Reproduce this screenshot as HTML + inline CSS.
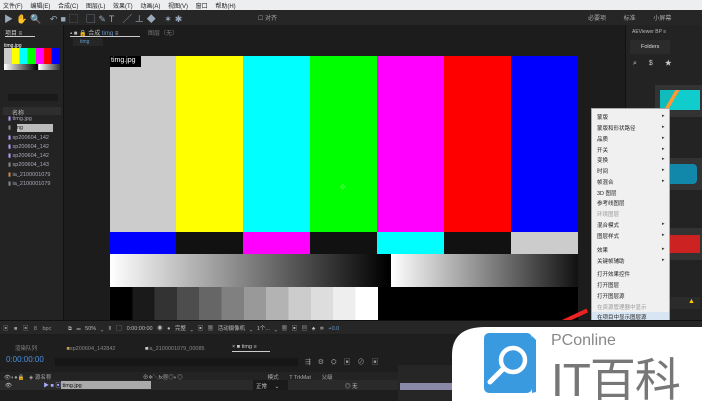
<!DOCTYPE html>
<html><head><meta charset="utf-8"><style>
*{margin:0;padding:0;box-sizing:border-box}
body{width:702px;height:401px;overflow:hidden;background:#1d1d1d;position:relative;font-family:"Liberation Sans","Noto Sans CJK SC",sans-serif;font-size:6px;color:#aaa}
.a{position:absolute}
.t{position:absolute;white-space:nowrap}
.m{position:absolute;left:597px;color:#222;font-size:5.5px;white-space:nowrap}
.r{position:absolute;left:662px;color:#333;font-size:5px}
</style></head><body>
<div class="a" style="left:0;top:0;width:702px;height:10px;background:#eceef0"></div>
<div class="t" style="left:3px;top:1px;color:#222;font-size:6px;word-spacing:6px">文件(F) 编辑(E) 合成(C) 图层(L) 效果(T) 动画(A) 视图(V) 窗口 帮助(H)</div>
<div class="a" style="left:0;top:10px;width:702px;height:15px;background:#262626"></div>
<div class="t" style="left:4px;top:12px;color:#9ab;font-size:9px;letter-spacing:3px">▶✋🔍 ↶■⬚ ▢✎T ╱⊥◆ ✶✱</div>
<div class="t" style="left:258px;top:13px;font-size:6px">☐ 对齐</div>
<div class="t" style="left:588px;top:13px;font-size:6px;word-spacing:16px">必要项 标准 小屏幕</div>
<div class="a" style="left:0;top:25px;width:63px;height:295px;background:#232323"></div>
<div class="t" style="left:5px;top:28px;color:#ccc">项目 ≡</div>
<div class="a" style="left:5px;top:36px;width:30px;height:1px;background:#ccc"></div>
<div class="t" style="left:4px;top:43px;color:#fff;font-size:5px">timg.jpg</div>
<div class="a" style="left:4px;top:48px;width:56px;height:16px;background:linear-gradient(90deg,#ccc 0 14%,#ff0 14% 28%,#0ff 28% 42%,#0f0 42% 57%,#f0f 57% 71%,#f00 71% 85%,#00f 85%)"></div>
<div class="a" style="left:4px;top:64px;width:56px;height:6px;background:linear-gradient(90deg,#fff,#000 60%,#fff 62%,#333)"></div>
<div class="a" style="left:8px;top:94px;width:50px;height:7px;background:#1a1a1a"></div>
<div class="a" style="left:3px;top:107px;width:58px;height:8px;background:#2e2e2e"></div>
<div class="t" style="left:12px;top:108px;color:#bbb">名称</div>
<div class="a" style="left:17px;top:124px;width:36px;height:8px;background:#bbb"></div>
<div class="t" style="left:8px;top:115px;line-height:9.3px;font-size:5.5px;color:#aab">
<span style="color:#b9f">▮</span> timg.jpg<br><span style="color:#888">▮</span> <span style="color:#222">timg</span><br><span style="color:#b9f">▮</span> sp200604_142<br><span style="color:#b9f">▮</span> sp200604_142<br><span style="color:#b9f">▮</span> sp200604_142<br><span style="color:#888">▮</span> sp200604_143<br><span style="color:#c84">▮</span> ia_2100001079<br><span style="color:#888">▮</span> ia_2100001079</div>
<div class="a" style="left:63px;top:25px;width:562px;height:295px;background:#1c1c1c;border-left:1px solid #111"></div>
<div class="t" style="left:70px;top:28px;color:#bbb">▪ ■ 🔒 合成 <span style="color:#69c">timg</span> ≡</div>
<div class="a" style="left:70px;top:36px;width:70px;height:1px;background:#ccc"></div>
<div class="t" style="left:148px;top:28px;color:#777">图层（无）</div>
<div class="a" style="left:73px;top:38px;width:30px;height:8px;background:#262626"></div>
<div class="t" style="left:80px;top:39px;color:#69c;font-size:5px">timg</div>
<div class="a" style="left:110px;top:56px;width:468px;height:176px;background:linear-gradient(90deg,#ccc 0 66px,#ff0 66px 133px,#0ff 133px 200px,#0f0 200px 267px,#f0f 267px 334px,#f00 334px 401px,#00f 401px)"></div>
<div class="a" style="left:110px;top:232px;width:468px;height:22px;background:linear-gradient(90deg,#00f 0 66px,#111 66px 133px,#f0f 133px 200px,#111 200px 267px,#0ff 267px 334px,#111 334px 401px,#ccc 401px)"></div>
<div class="a" style="left:110px;top:254px;width:468px;height:33px;background:#000"></div>
<div class="a" style="left:110px;top:254px;width:278px;height:33px;background:linear-gradient(90deg,#fff,#000)"></div>
<div class="a" style="left:391px;top:254px;width:187px;height:33px;background:linear-gradient(90deg,#fff,#111)"></div>
<div class="a" style="left:110px;top:287px;width:468px;height:33px;background:#000"></div>
<div class="a" style="left:110px;top:287px;width:268px;height:33px;background:linear-gradient(90deg,#000 0 8.33%,#1a1a1a 8.33% 16.66%,#333 16.66% 25%,#4d4d4d 25% 33.3%,#666 33.3% 41.6%,#808080 41.6% 50%,#999 50% 58.3%,#b3b3b3 58.3% 66.6%,#ccc 66.6% 75%,#ddd 75% 83.3%,#eee 83.3% 91.6%,#fff 91.6%)"></div>
<div class="a" style="left:110px;top:56px;width:31px;height:11px;background:#000"></div>
<div class="t" style="left:111px;top:57px;color:#fff;font-size:7px">timg.jpg</div>
<div class="t" style="left:339px;top:182px;color:#8f8;font-size:9px">✧</div>
<div class="a" style="left:625px;top:25px;width:77px;height:295px;background:#232323;border-left:1px solid #111"></div>
<div class="t" style="left:632px;top:29px;font-size:5px;color:#bbb">AEViewer BP ≡</div>
<div class="a" style="left:630px;top:40px;width:40px;height:14px;background:#2b2b2b"></div>
<div class="t" style="left:641px;top:44px;font-size:5.5px;color:#ddd">Folders</div>
<div class="t" style="left:633px;top:58px;font-size:7px;color:#ccc;word-spacing:10px">⌕ $ ★</div>
<div class="a" style="left:655px;top:85px;width:47px;height:32px;background:#333"></div>
<div class="a" style="left:660px;top:90px;width:40px;height:20px;background:linear-gradient(120deg,#1bb 0 30%,#f93 30% 38%,#1cc 38%)"></div>
<div class="a" style="left:655px;top:158px;width:47px;height:32px;background:#333"></div>
<div class="a" style="left:665px;top:164px;width:32px;height:20px;background:#18a;border-radius:4px"></div>
<div class="a" style="left:655px;top:228px;width:47px;height:32px;background:#333"></div>
<div class="a" style="left:665px;top:235px;width:35px;height:18px;background:#c22"></div>
<div class="a" style="left:655px;top:297px;width:45px;height:12px;background:#2b2b2b"></div>
<div class="t" style="left:688px;top:298px;color:#fc0;font-size:7px">▲</div>
<!-- context menu -->
<div class="a" style="left:591px;top:108px;width:79px;height:225px;background:#f0f0f0;border:1px solid #aaa"></div>
<div class="a" style="left:592px;top:312px;width:77px;height:9px;background:#d8e6f4"></div>
<div class="m" style="top:113px">蒙版</div>
<div class="m" style="top:124px">蒙版和形状路径</div>
<div class="m" style="top:135px">品质</div>
<div class="m" style="top:146px">开关</div>
<div class="m" style="top:156px">变换</div>
<div class="m" style="top:167px">时间</div>
<div class="m" style="top:178px">帧混合</div>
<div class="m" style="top:189px">3D 图层</div>
<div class="m" style="top:199px">参考线图层</div>
<div class="m" style="top:210px;color:#999">环境图层</div>
<div class="m" style="top:221px">混合模式</div>
<div class="m" style="top:232px">图层样式</div>
<div class="m" style="top:246px">效果</div>
<div class="m" style="top:257px">关键帧辅助</div>
<div class="m" style="top:270px">打开效果控件</div>
<div class="m" style="top:281px">打开图层</div>
<div class="m" style="top:292px">打开图层源</div>
<div class="m" style="top:303px;color:#999">在资源管理器中显示</div>
<div class="m" style="top:313px">在项目中显示图层源</div>
<div class="m" style="top:323px">在项目流程图中显示图层</div>
<div class="r" style="top:113px">▸</div><div class="r" style="top:124px">▸</div><div class="r" style="top:135px">▸</div><div class="r" style="top:146px">▸</div><div class="r" style="top:156px">▸</div><div class="r" style="top:167px">▸</div><div class="r" style="top:178px">▸</div><div class="r" style="top:221px">▸</div><div class="r" style="top:232px">▸</div><div class="r" style="top:246px">▸</div><div class="r" style="top:257px">▸</div>
<div class="a" style="left:553px;top:316px;width:36px;height:4px;background:#e22;transform:rotate(-25deg)"></div>
<div class="a" style="left:0;top:320px;width:702px;height:14px;background:#262626;border-top:1px solid #111"></div>
<div class="t" style="left:3px;top:324px;font-size:5.5px;color:#999;word-spacing:4px">▣ ■ ▣ 8 bpc</div>
<div class="t" style="left:68px;top:324px;font-size:5.5px;color:#bbb;word-spacing:3px">⧉ ▭ 50% ⌄ ▯ ▢ 0:00:00:00 ◉ ● 完整 ⌄ ▣ ▦ 活动摄像机 ⌄ 1个... ⌄ ▦ ▣ ▤ ♣ ✲ <span style="color:#69c">+0.0</span></div>
<div class="a" style="left:0;top:336px;width:702px;height:65px;background:#1e1e1e"></div>
<div class="t" style="left:15px;top:344px;font-size:5.5px;color:#888;word-spacing:28px">渲染队列 <span style="color:#c9a34a">■</span>sp200604_142842 <span style="color:#ccc">■</span>ia_2100001079_00085</div>
<div class="t" style="left:232px;top:344px;font-size:5.5px;color:#ccc">× ■ timg ≡</div>
<div class="a" style="left:232px;top:351px;width:38px;height:1px;background:#ccc"></div>
<div class="t" style="left:6px;top:355px;font-size:8px;color:#4a8fe0">0:00:00:00</div>
<div class="a" style="left:55px;top:358px;width:243px;height:8px;background:#161616"></div>
<div class="t" style="left:305px;top:357px;font-size:7px;color:#999;word-spacing:5px">⇶ ⚙ ⛭ ▣ ⊘ ▣</div>
<div class="a" style="left:0;top:372px;width:400px;height:8px;background:#232323"></div>
<div class="t" style="left:4px;top:373px;font-size:5.5px;color:#aaa">👁◐●🔒 &nbsp; ◈ 源名称 <span style="margin-left:90px">⊕✲╲fx▦◎◐◎</span><span style="margin-left:85px">模式 &nbsp; &nbsp; &nbsp; T TrkMat &nbsp; &nbsp; &nbsp; 父级</span></div>
<div class="a" style="left:0;top:380px;width:400px;height:10px;background:#2a2a2a"></div>
<div class="a" style="left:61px;top:381px;width:90px;height:8px;background:#aaa"></div>
<div class="t" style="left:5px;top:381px;font-size:5.5px;color:#bbb">👁 <span style="margin-left:30px;color:#aaf">▶ ■ ▣</span> <span style="color:#111">timg.jpg</span></div>
<div class="a" style="left:253px;top:380px;width:35px;height:10px;background:#1a1a1a"></div>
<div class="t" style="left:256px;top:382px;font-size:5.5px;color:#ccc">正常 &nbsp; &nbsp; ⌄</div>
<div class="t" style="left:345px;top:382px;font-size:5.5px;color:#ccc">◎ 无</div>
<div class="a" style="left:398px;top:365px;width:304px;height:36px;background:#262626"></div>
<div class="a" style="left:400px;top:383px;width:302px;height:7px;background:#8a8aa8"></div>
<svg class="a" style="left:0;top:0" width="702" height="401">
<path d="M452 401 L452 355 Q452 327 485 327 L702 327 L702 401 Z" fill="#fff"/>
<rect x="484" y="333" width="48" height="60" rx="5" fill="#3a9ae0"/>
<path d="M532 336 L536 340 L536 392 L532 393" fill="#3a9ae0"/>
<circle cx="513" cy="360" r="12" fill="none" stroke="#fff" stroke-width="4.5"/>
<line x1="503" y1="369" x2="490" y2="382" stroke="#fff" stroke-width="5" stroke-linecap="round"/>
<text x="551" y="345" font-family="Liberation Sans" font-size="16" fill="#888">PConline</text>
<text x="551" y="396" font-family="Liberation Sans, Noto Sans CJK SC, sans-serif" font-size="46" fill="#777" letter-spacing="-1">IT百科</text>
</svg>
</body></html>
